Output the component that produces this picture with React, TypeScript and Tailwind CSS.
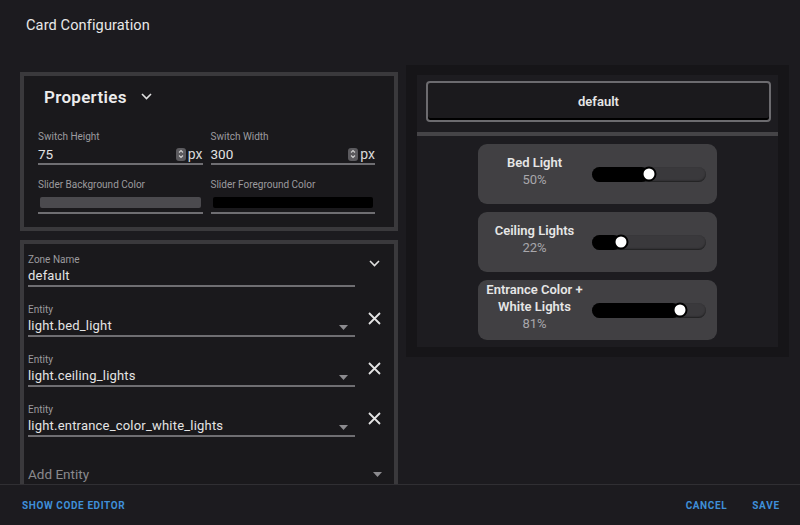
import React from 'react';

const font = { fontFamily: 'Roboto, "Noto Sans", sans-serif' };

const Spinner = () => (
  <span className="w-[10px] h-[13px] rounded-[3px] bg-[#5b5a5e] flex items-center justify-center">
    <svg width="6" height="10" viewBox="0 0 6 10" fill="none" stroke="#d0d0d0" strokeWidth="1.1">
      <path d="M1 3.5 L3 1.5 L5 3.5" />
      <path d="M1 6.5 L3 8.5 L5 6.5" />
    </svg>
  </span>
);

const Chevron = ({ className = '' }: { className?: string }) => (
  <svg className={className} width="11" height="7" viewBox="0 0 11 7" fill="none" stroke="#e0e0e0" strokeWidth="1.6">
    <path d="M1 1 L5.5 5.5 L10 1" />
  </svg>
);

const Cross = () => (
  <svg width="13" height="13" viewBox="0 0 13 13" fill="none" stroke="#e4e4e4" strokeWidth="1.8">
    <path d="M1 1 L12 12 M12 1 L1 12" />
  </svg>
);

const Caret = () => (
  <svg width="9" height="5" viewBox="0 0 9 5" fill="#8c8b8f">
    <path d="M0 0 H9 L4.5 5 Z" />
  </svg>
);

const NumberField = ({ label, value }: { label: string; value: string }) => (
  <div className="flex flex-col">
    <span className="text-[10px] text-[#9c9b9f] leading-[12px]">{label}</span>
    <div className="flex items-center h-[20px] mt-[2px] border-b-2 border-[#6f6e72]">
      <span className="flex-1 text-[13.5px] text-[#e2e2e2]">{value}</span>
      <Spinner />
      <span className="text-[14px] text-[#d8d8d8] ml-[2px]">px</span>
    </div>
  </div>
);

const ColorField = ({ label, color }: { label: string; color: string }) => (
  <div className="flex flex-col">
    <span className="text-[10px] text-[#9c9b9f] leading-[12px]">{label}</span>
    <div className="pt-[6px] pb-[4px] px-[2px] border-b-2 border-[#6f6e72]">
      <div className={`h-[11px] rounded-[2px] ${color}`} />
    </div>
  </div>
);

const EntityRow = ({ label, value, zone }: { label: string; value: string; zone?: boolean }) => (
  <div className="flex items-start">
    <div className="w-[327px] flex flex-col">
      <span className="text-[10px] text-[#9c9b9f] leading-[12px]">{label}</span>
      <div className="flex items-center h-[21px] border-b-2 border-[#6f6e72]">
        <span className="flex-1 text-[13px] text-[#e4e4e4] tracking-[0.2px]">{value}</span>
        {!zone && <span className="mr-[7px] mt-[3px] flex"><Caret /></span>}
      </div>
    </div>
    <div className="flex-1 flex justify-center">
      {zone ? (
        <span className="mt-[6px] ml-[3px] flex"><Chevron /></span>
      ) : (
        <span className="mt-[8px] ml-[3px] flex"><Cross /></span>
      )}
    </div>
  </div>
);

const LightRow = ({ name, pct }: { name: React.ReactNode; pct: number }) => (
  <div className="w-[239px] h-[60px] rounded-[9px] bg-[#414043] flex items-center">
    <div className="w-[114px] flex flex-col items-center leading-[17px] pb-[7px]">
      <span className="text-[13px] font-semibold text-[#e6e6e6] text-center">{name}</span>
      <span className="text-[13px] text-[#a8a7ab]">{pct}%</span>
    </div>
    <div className="relative w-[114px] h-[15px] rounded-full bg-[#3a393c] shadow-[inset_0_-1px_2px_rgba(0,0,0,0.5)]">
      <div className="h-full rounded-full bg-black" style={{ width: 7 + pct }} />
      <div
        className="absolute top-1/2 -translate-y-1/2 -translate-x-1/2 w-[15px] h-[15px] rounded-full bg-white border-2 border-black"
        style={{ left: 7 + pct }}
      />
    </div>
  </div>
);

export default function App() {
  return (
    <div className="w-[800px] h-[525px] bg-[#1c1b1f] flex flex-col overflow-hidden" style={font}>
      <div className="h-[48px] flex items-center px-[26px] pt-[3px] shrink-0">
        <span className="text-[14.6px] text-[#e8e8e8] tracking-[0.1px]">Card Configuration</span>
      </div>

      <div className="flex-1 overflow-hidden flex items-start pt-[17px] pl-[20px] gap-[8px]">
        <div className="w-[378px] mt-[7px] flex flex-col gap-[9px]">
          <div className="h-[159px] border-4 border-[#3a393c] bg-[#1a191c] pl-[14px] pr-[19px] pt-[11px]">
            <div className="flex items-center gap-[14px] pl-[6px] h-[22px]">
              <span className="text-[17px] font-semibold text-[#ececec] tracking-[0.3px]">Properties</span>
              <Chevron className="mt-[-4px]" />
            </div>
            <div className="grid grid-cols-2 gap-x-[8px] gap-y-[14px] mt-[22px]">
              <NumberField label="Switch Height" value="75" />
              <NumberField label="Switch Width" value="300" />
              <ColorField label="Slider Background Color" color="bg-[#4b4a4e]" />
              <ColorField label="Slider Foreground Color" color="bg-black" />
            </div>
          </div>

          <div className="h-[300px] border-4 border-[#3a393c] bg-[#1a191c] px-[4px] pt-[10px] flex flex-col gap-[17px]">
            <EntityRow label="Zone Name" value="default" zone />
            <EntityRow label="Entity" value="light.bed_light" />
            <EntityRow label="Entity" value="light.ceiling_lights" />
            <EntityRow label="Entity" value="light.entrance_color_white_lights" />
            <div className="flex items-center mt-[10px] pr-[8px]">
              <span className="flex-1 text-[13.5px] text-[#8a898d]">Add Entity</span>
              <Caret />
            </div>
          </div>
        </div>

        <div className="w-[383px] h-[292px] bg-[#161518] px-[11px] pt-[10px] pb-[10px]">
          <div className="h-full bg-[#1d1c20] flex flex-col">
            <div className="pl-[9px] pr-[7px] pt-[6px]">
              <div className="h-[41px] rounded-[4px] border-2 border-[#6c6b6f] bg-[#1b1a1d] shadow-[inset_0_-2px_0_#000] flex items-center justify-center">
                <span className="text-[13px] font-semibold text-[#e6e6e6]">default</span>
              </div>
            </div>
            <div className="h-[4px] bg-[#454447] mt-[10px]" />
            <div className="flex flex-col items-center gap-[8px] pt-[8px] pr-[1px]">
              <LightRow name="Bed Light" pct={50} />
              <LightRow name="Ceiling Lights" pct={22} />
              <LightRow
                name={
                  <>
                    Entrance Color +<br />White Lights
                  </>
                }
                pct={81}
              />
            </div>
          </div>
        </div>
      </div>

      <div className="h-[41px] shrink-0 border-t border-[#302f33] flex items-center pl-[22px] pr-[20px]">
        <span className="text-[10px] font-bold tracking-[0.6px] text-[#3f8fd8]">SHOW CODE EDITOR</span>
        <div className="flex-1" />
        <span className="text-[10px] font-bold tracking-[0.6px] text-[#3f8fd8] mr-[25px]">CANCEL</span>
        <span className="text-[10px] font-bold tracking-[0.8px] text-[#3f8fd8]">SAVE</span>
      </div>
    </div>
  );
}
